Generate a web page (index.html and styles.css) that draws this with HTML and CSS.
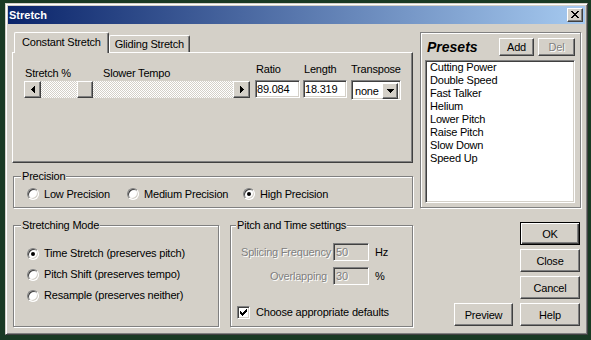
FILE: index.html
```html
<!DOCTYPE html>
<html lang="en">
<head>
  <meta charset="UTF-8" />
  <meta name="viewport" content="width=device-width, initial-scale=1" />
  <title>Stretch</title>
  <link rel="stylesheet" href="styles.css">
</head>
<body>
  <div class="window">
    <div class="titlebar">
      <span class="title">Stretch</span>
      <div class="btn-x">
        <svg width="8" height="7" viewBox="0 0 8 7" shape-rendering="crispEdges">
          <rect x="0" y="0" width="2" height="1"/><rect x="6" y="0" width="2" height="1"/>
          <rect x="1" y="1" width="2" height="1"/><rect x="5" y="1" width="2" height="1"/>
          <rect x="2" y="2" width="4" height="1"/>
          <rect x="3" y="3" width="2" height="1"/>
          <rect x="2" y="4" width="4" height="1"/>
          <rect x="1" y="5" width="2" height="1"/><rect x="5" y="5" width="2" height="1"/>
          <rect x="0" y="6" width="2" height="1"/><rect x="6" y="6" width="2" height="1"/>
        </svg>
      </div>
    </div>

    <div class="dialog">
      <div class="left">
        <div class="tabs">
          <div class="tab active">Constant Stretch</div>
          <div class="tab">Gliding Stretch</div>
        </div>
        <div class="tab-panel">
          <div class="stretch">
            <div class="stretch-labels">
              <span class="lbl-pct">Stretch %</span>
              <span>Slower Tempo</span>
            </div>
            <div class="scrollbar">
              <div class="sb-btn">
                <svg width="4" height="7" viewBox="0 0 4 7" shape-rendering="crispEdges"><path d="M4 0v7L0 3.5z"/></svg>
              </div>
              <div class="sb-track">
                <div class="sb-thumb" style="margin-left: 36px"></div>
              </div>
              <div class="sb-btn">
                <svg width="4" height="7" viewBox="0 0 4 7" shape-rendering="crispEdges"><path d="M0 0v7l4-3.5z"/></svg>
              </div>
            </div>
          </div>
          <div class="field ratio">
            <label>Ratio</label>
            <div class="input">89.084</div>
          </div>
          <div class="field length">
            <label>Length</label>
            <div class="input">18.319</div>
          </div>
          <div class="field transpose">
            <label>Transpose</label>
            <div class="combo">
              <span class="combo-text">none</span>
              <span class="combo-btn">
                <svg width="7" height="4" viewBox="0 0 7 4" shape-rendering="crispEdges"><path d="M0 0h7L3.5 4z"/></svg>
              </span>
            </div>
          </div>
        </div>

        <fieldset class="group precision">
          <legend>Precision</legend>
          <div class="precision-row">
            <label class="radio"><span class="dot"></span>Low Precision</label>
            <label class="radio"><span class="dot"></span>Medium Precision</label>
            <label class="radio"><span class="dot on"></span>High Precision</label>
          </div>
        </fieldset>

        <div class="bottom-row">
          <fieldset class="group mode">
            <legend>Stretching Mode</legend>
            <label class="radio"><span class="dot on"></span>Time Stretch (preserves pitch)</label>
            <label class="radio"><span class="dot"></span>Pitch Shift (preserves tempo)</label>
            <label class="radio"><span class="dot"></span>Resample (preserves neither)</label>
          </fieldset>

          <fieldset class="group pitch">
            <legend>Pitch and Time settings</legend>
            <div class="pitch-grid">
              <span class="disabled">Splicing Frequency</span>
              <div class="input off">50</div>
              <span class="unit">Hz</span>
              <span class="disabled overlap">Overlapping</span>
              <div class="input off">30</div>
              <span class="unit">%</span>
            </div>
            <label class="check">
              <span class="box">
                <svg width="7" height="7" viewBox="0 0 7 7" shape-rendering="crispEdges">
                  <path d="M6 0h1v3h-1v1h-1v1h-1v1h-1v1h-1v-1h-1v-1h-1v-3h1v1h1v1h1v-1h1v-1h1z"/>
                </svg>
              </span>
              Choose appropriate defaults
            </label>
          </fieldset>
        </div>
      </div>

      <div class="right">
        <div class="presets">
          <div class="presets-head">
            <span class="presets-title">Presets</span>
            <button class="btn btn-add">Add</button>
            <button class="btn btn-del">Del</button>
          </div>
          <ul class="preset-list">
            <li>Cutting Power</li>
            <li>Double Speed</li>
            <li>Fast Talker</li>
            <li>Helium</li>
            <li>Lower Pitch</li>
            <li>Raise Pitch</li>
            <li>Slow Down</li>
            <li>Speed Up</li>
          </ul>
        </div>

        <div class="buttons">
          <button class="btn btn-ok">OK</button>
          <button class="btn btn-close">Close</button>
          <button class="btn btn-cancel">Cancel</button>
          <button class="btn btn-preview">Preview</button>
          <button class="btn btn-help">Help</button>
        </div>
      </div>
    </div>
  </div>
</body>
</html>
```

FILE: styles.css
```css
body {
  margin: 0;
  background: #1a3a24;
  font-family: "Liberation Sans", Arial, sans-serif;
  font-size: 11px;
  letter-spacing: -0.2px;
  color: #000;
}
.window {
  margin: 3px 0 0 5px;
  width: 583px;
  height: 332px;
  box-sizing: border-box;
  background: #d4d0c8;
  border: 1px solid;
  border-color: #d4d0c8 #404040 #404040 #d4d0c8;
  box-shadow: inset 1px 1px #fff, inset -1px -1px #808080;
  padding: 2px;
}
.titlebar {
  height: 18px;
  display: flex;
  align-items: center;
  background: linear-gradient(to right, #0a246a, #a6caf0);
}
.title {
  color: #fff;
  font-weight: bold;
  letter-spacing: 0;
  padding-left: 1px;
  flex: 1;
}
.btn-x {
  width: 16px;
  height: 14px;
  margin-right: 2px;
  box-sizing: border-box;
  background: #d4d0c8;
  border: 1px solid;
  border-color: #fff #404040 #404040 #fff;
  box-shadow: inset -1px -1px #808080;
  display: flex;
  align-items: center;
  justify-content: center;
}
.btn-x svg {
  margin: 0 1px 1px 0;
}
.dialog {
  display: flex;
  gap: 7px;
  padding: 8px 4px 0 4px;
}
.left {
  width: 401px;
}
.right {
  width: 161px;
}

/* tabs */
.tabs {
  display: flex;
  align-items: flex-end;
  height: 20px;
  padding-left: 2px;
  position: relative;
  z-index: 1;
}
.tab {
  box-sizing: border-box;
  height: 17px;
  line-height: 16px;
  padding: 0 5px 0 5px;
  background: #d4d0c8;
  border-top: 1px solid #fff;
  border-left: 1px solid #fff;
  border-right: 1px solid #404040;
  box-shadow: inset -1px 0 #808080;
  border-radius: 2px 2px 0 0;
}
.tab.active {
  height: 21px;
  line-height: 19px;
  margin-bottom: -1px;
  padding: 0 7px 0 7px;
}
.tab-panel {
  box-sizing: border-box;
  height: 111px;
  border: 1px solid;
  border-color: #fff #404040 #404040 #fff;
  box-shadow: inset -1px -1px #808080;
  padding: 10px 0 0 11px;
  display: flex;
  align-items: flex-start;
}
.stretch {
  width: 226px;
  margin: 4px 5px 0 0;
}
.stretch-labels {
  display: flex;
  line-height: 13px;
}
.lbl-pct {
  width: 78px;
  padding-left: 1px;
}
.scrollbar {
  display: flex;
  height: 17px;
  margin-top: 1px;
}
.sb-btn,
.sb-thumb,
.combo-btn,
.btn {
  box-sizing: border-box;
  background: #d4d0c8;
  border: 1px solid;
  border-color: #fff #404040 #404040 #fff;
  box-shadow: inset -1px -1px #808080;
}
.sb-btn {
  width: 17px;
  display: flex;
  align-items: center;
  justify-content: center;
}
.sb-track {
  flex: 1;
  display: flex;
  background: repeating-conic-gradient(#fff 0 25%, #d4d0c8 0 50%) 0 0 / 2px 2px;
}
.sb-thumb {
  width: 16px;
  height: 17px;
}
.field label {
  display: block;
  line-height: 13px;
  margin-bottom: 4px;
  padding-left: 1px;
}
.field + .field {
  margin-left: 3px;
}
.ratio { width: 45px; }
.length { width: 44px; }
.transpose { width: 50px; margin-left: 4px !important; }
.transpose label { padding-left: 0; }
.input,
.combo,
.preset-list,
.dot,
.box {
  box-sizing: border-box;
  background: #fff;
  border: 1px solid;
  border-color: #808080 #fff #fff #808080;
  box-shadow: inset 1px 1px #404040, inset -1px -1px #d4d0c8;
}
.input {
  height: 18px;
  line-height: 16px;
  padding-left: 1px;
}
.combo {
  height: 20px;
  display: flex;
  padding: 2px;
}
.combo-text {
  flex: 1;
  line-height: 16px;
  padding-left: 1px;
}
.combo-btn {
  width: 16px;
  height: 16px;
  display: flex;
  align-items: center;
  justify-content: center;
}

/* group boxes */
.group {
  margin: 0 0 0 1px;
  padding: 0 6px 0 7px;
  border: 1px solid #808080;
  box-shadow: inset 1px 1px #fff, 1px 1px #fff;
  box-sizing: border-box;
  min-width: 0;
}
.group legend {
  padding: 0 1px;
  line-height: 13px;
  background: #d4d0c8;
}
.precision {
  height: 38px;
  margin-top: 7px;
}
.precision-row {
  display: grid;
  grid-template-columns: 100px 116px auto;
  padding: 3px 0 0 6px;
}
.radio {
  display: flex;
  align-items: center;
  gap: 5px;
  line-height: 16px;
}
.dot {
  width: 12px;
  height: 12px;
  border-radius: 50%;
  display: flex;
  align-items: center;
  justify-content: center;
}
.dot.on::after {
  content: "";
  width: 4px;
  height: 4px;
  border-radius: 50%;
  background: #000;
}
.bottom-row {
  display: flex;
  gap: 11px;
  margin-top: 11px;
}
.mode {
  width: 206px;
  height: 108px;
  padding-top: 11px;
}
.mode .radio {
  line-height: 21px;
  padding-left: 6px;
}
.pitch {
  width: 183px;
  height: 108px;
  margin-left: 0;
  padding: 11px 4px 0 5px;
}
.pitch-grid {
  display: grid;
  grid-template-columns: 95px 36px auto;
  grid-auto-rows: 18px;
  column-gap: 2px;
  row-gap: 6px;
  align-items: center;
}
.disabled {
  color: #808080;
  text-shadow: 1px 1px #fff;
  text-align: right;
}
.overlap {
  padding-right: 4px;
}
.input.off {
  background: #d4d0c8;
  color: #808080;
  text-shadow: 1px 1px #fff;
  padding-left: 2px;
}
.unit {
  padding-left: 4px;
}
.check {
  display: flex;
  align-items: center;
  gap: 6px;
  margin: 21px 0 0 1px;
  line-height: 13px;
}
.box {
  width: 13px;
  height: 13px;
  display: flex;
  align-items: center;
  justify-content: center;
}

/* presets */
.presets {
  box-sizing: border-box;
  height: 176px;
  border: 1px solid #808080;
  box-shadow: inset 1px 1px #fff, 1px 1px #fff;
  padding: 4px 5px 4px 4px;
}
.presets-head {
  display: flex;
  align-items: center;
  height: 19px;
}
.presets-title {
  font-size: 14px;
  font-weight: bold;
  font-style: italic;
  letter-spacing: 0;
  margin-left: 2px;
  flex: 1;
}
.btn {
  font-family: inherit;
  font-size: 11px;
  letter-spacing: inherit;
  color: #000;
  padding: 0;
}
.btn-add {
  width: 35px;
  height: 18px;
}
.btn-del {
  width: 37px;
  height: 18px;
  margin-left: 4px;
  color: #808080;
  text-shadow: 1px 1px #fff;
}
.preset-list {
  list-style: none;
  margin: 4px 0 0 0;
  height: 143px;
  padding: 0 2px;
  line-height: 13px;
}
.preset-list li {
  padding-left: 2px;
}
.buttons {
  display: grid;
  grid-template-columns: 59px 60px;
  grid-auto-rows: 23px;
  column-gap: 7px;
  row-gap: 4px;
  justify-content: end;
  margin-top: 14px;
  padding-right: 1px;
}
.buttons .btn {
  grid-column: 2;
}
.buttons .btn-preview {
  grid-column: 1;
}
.btn-ok {
  border-color: #000;
  box-shadow: inset 1px 1px #fff, inset -1px -1px #404040, inset -2px -2px #808080;
}
```
